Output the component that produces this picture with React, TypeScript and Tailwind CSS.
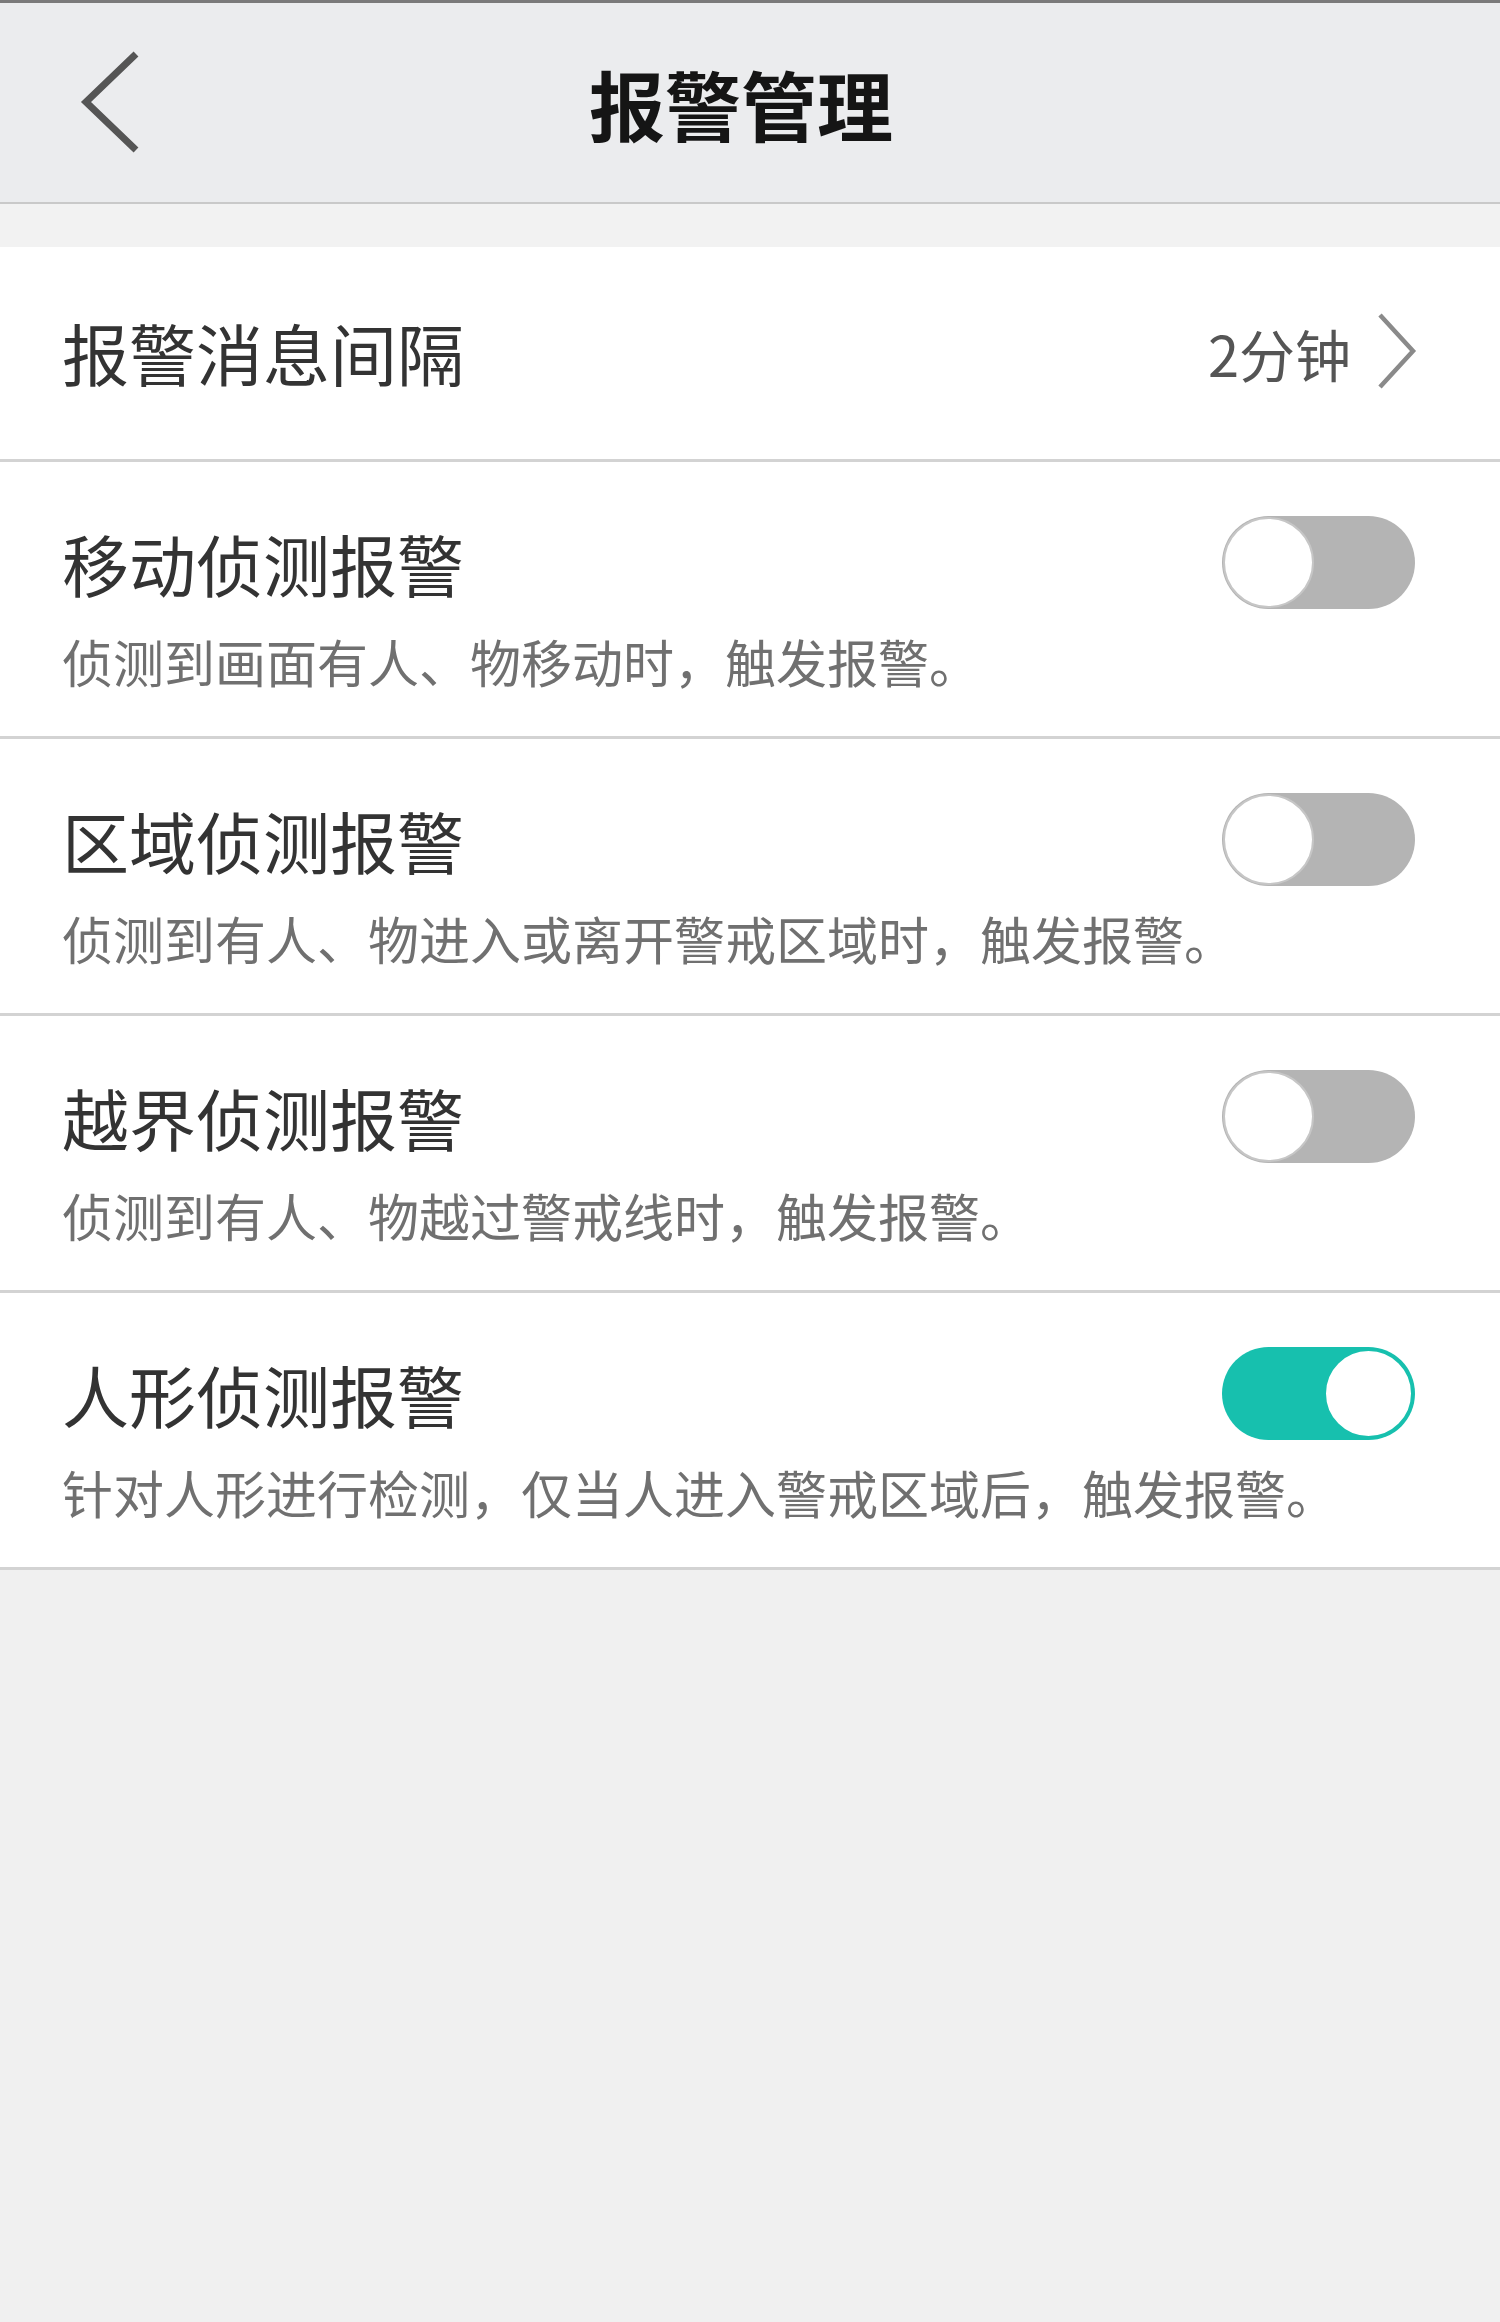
import React from 'react';

type AlarmItem = {
  title: string;
  desc: string;
  on: boolean;
};

const alarmItems: AlarmItem[] = [
  { title: '移动侦测报警', desc: '侦测到画面有人、物移动时，触发报警。', on: false },
  { title: '区域侦测报警', desc: '侦测到有人、物进入或离开警戒区域时，触发报警。', on: false },
  { title: '越界侦测报警', desc: '侦测到有人、物越过警戒线时，触发报警。', on: false },
  { title: '人形侦测报警', desc: '针对人形进行检测，仅当人进入警戒区域后，触发报警。', on: true },
];

const font = "font-['Noto_Sans_CJK_SC','Noto_Sans',sans-serif]";

function Toggle({ on }: { on: boolean }) {
  if (on) {
    return (
      <div className="flex h-[93px] w-[193px] shrink-0 items-center justify-end rounded-full bg-[#17c0ae] p-[1px]">
        <div className="h-[91px] w-[91px] rounded-full border-[3px] border-[#17c0ae] bg-white" />
      </div>
    );
  }
  return (
    <div className="flex h-[93px] w-[193px] shrink-0 items-center justify-start rounded-full bg-[#b4b4b4] p-[1px]">
      <div className="h-[91px] w-[91px] rounded-full border-2 border-[#c6c6c6] bg-white" />
    </div>
  );
}

function AlarmRow({ item }: { item: AlarmItem }) {
  return (
    <div className="flex h-[277px] flex-col border-b-[3px] border-[#d3d3d3] bg-white pl-[62px] pr-[85px] pt-[54px]">
      <div className="flex h-[93px] items-center justify-between">
        <span className="text-[67px] leading-none text-[#333333]">{item.title}</span>
        <Toggle on={item.on} />
      </div>
      <div className="mt-[27px] text-[51px] leading-none text-[#707070]">{item.desc}</div>
    </div>
  );
}

export default function App() {
  return (
    <div className={`${font} min-h-[2322px] w-[1500px] bg-[#f0f0f0]`}>
      <header className="grid h-[204px] grid-cols-[1fr_auto_1fr] items-center border-b-2 border-t-[3px] border-b-[#c9c9c9] border-t-[#7a7a7a] bg-[#ebecee]">
        <div className="flex items-center pl-[80px]">
          <svg width="62" height="106" viewBox="0 0 62 106" fill="none">
            <polyline
              points="56,4 6,52 56,100"
              stroke="#555555"
              strokeWidth="7"
              strokeLinecap="butt"
              strokeLinejoin="miter"
            />
          </svg>
        </div>
        <h1 className="mr-[18px] text-[76px] font-bold leading-none text-[#151515]">报警管理</h1>
        <div />
      </header>

      <div className="h-[43px] bg-[#f2f2f2]" />

      <div className="flex h-[215px] items-center justify-between border-b-[3px] border-[#d3d3d3] bg-white pl-[62px] pr-[83px]">
        <span className="-mt-[4px] text-[67px] leading-none text-[#333333]">报警消息间隔</span>
        <div className="flex items-center gap-[26px]">
          <span className="text-[56px] leading-none text-[#555555]">2分钟</span>
          <svg width="40" height="76" viewBox="0 0 40 76" fill="none" className="-mt-[4px]">
            <polyline points="3,2 36,38 3,74" stroke="#8a8a8a" strokeWidth="4.5" />
          </svg>
        </div>
      </div>

      {alarmItems.map((item) => (
        <AlarmRow key={item.title} item={item} />
      ))}
    </div>
  );
}
